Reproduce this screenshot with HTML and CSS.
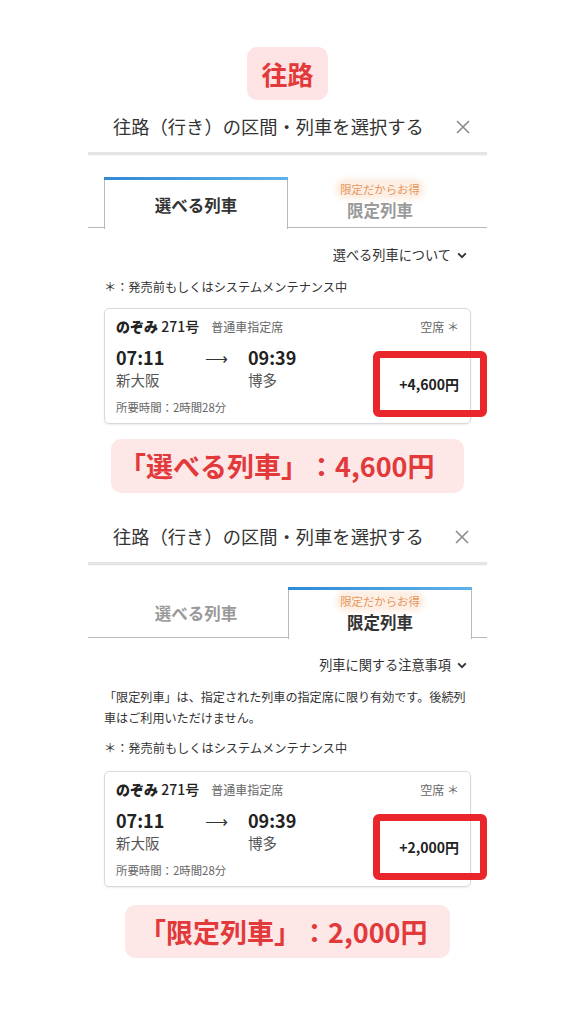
FILE: index.html
```html
<!DOCTYPE html>
<html lang="ja">
<head>
<meta charset="utf-8">
<link rel="stylesheet" href="styles.css">
</head>
<body>
<div class="page">
  <div class="center"><span class="pill-top">往路</span></div>

  <div class="header">
    <span class="title">往路（行き）の区間・列車を選択する</span>
    <svg class="close" width="14" height="14" viewBox="0 0 14 14"><path d="M1 1L13 13M13 1L1 13" stroke="#8a8a8a" stroke-width="1.6" fill="none"/></svg>
  </div>
  <div class="divider"></div>

  <div class="tabs">
    <div class="tab active"><span class="tab-label">選べる列車</span></div>
    <div class="tab"><span class="badge">限定だからお得</span><span class="tab-label muted">限定列車</span></div>
  </div>

  <div class="link-row">選べる列車について<svg class="chev" width="10" height="7" viewBox="0 0 10 7"><path d="M1.2 1.4L5 5.2L8.8 1.4" stroke="#333" stroke-width="1.9" fill="none"/></svg></div>
  <p class="note">＊：発売前もしくはシステムメンテナンス中</p>

  <div class="card">
    <div class="card-top">
      <span class="train"><b>のぞみ</b> <span class="num">271号</span></span>
      <span class="seat-type">普通車指定席</span>
      <span class="vacancy">空席 ＊</span>
    </div>
    <div class="card-mid">
      <span class="time">07:11</span>
      <span class="arrow">⟶</span>
      <span class="time">09:39</span>
      <span class="price">+4,600円</span>
      <span class="station">新大阪</span>
      <span></span>
      <span class="station">博多</span>
    </div>
    <div class="duration">所要時間：2時間28分</div>
    <div class="highlight"></div>
  </div>

  <div class="center"><span class="annot annot-1">「選べる列車」：4,600円</span></div>

  <div class="header header-2">
    <span class="title">往路（行き）の区間・列車を選択する</span>
    <svg class="close" width="14" height="14" viewBox="0 0 14 14"><path d="M1 1L13 13M13 1L1 13" stroke="#8a8a8a" stroke-width="1.6" fill="none"/></svg>
  </div>
  <div class="divider"></div>

  <div class="tabs">
    <div class="tab"><span class="tab-label muted">選べる列車</span></div>
    <div class="tab active"><span class="badge">限定だからお得</span><span class="tab-label">限定列車</span></div>
  </div>

  <div class="link-row">列車に関する注意事項<svg class="chev" width="10" height="7" viewBox="0 0 10 7"><path d="M1.2 1.4L5 5.2L8.8 1.4" stroke="#333" stroke-width="1.9" fill="none"/></svg></div>
  <p class="para">「限定列車」は、指定された列車の指定席に限り有効です。後続列<br>車はご利用いただけません。</p>
  <p class="note note-2">＊：発売前もしくはシステムメンテナンス中</p>

  <div class="card card-2">
    <div class="card-top">
      <span class="train"><b>のぞみ</b> <span class="num">271号</span></span>
      <span class="seat-type">普通車指定席</span>
      <span class="vacancy">空席 ＊</span>
    </div>
    <div class="card-mid">
      <span class="time">07:11</span>
      <span class="arrow">⟶</span>
      <span class="time">09:39</span>
      <span class="price">+2,000円</span>
      <span class="station">新大阪</span>
      <span></span>
      <span class="station">博多</span>
    </div>
    <div class="duration">所要時間：2時間28分</div>
    <div class="highlight"></div>
  </div>

  <div class="center"><span class="annot annot-2">「限定列車」：2,000円</span></div>
</div>
</body>
</html>
```

FILE: styles.css
```css
* { box-sizing: border-box; }
html, body { margin: 0; padding: 0; background: #fff; }
body {
  font-family: "Noto Sans CJK JP", "Noto Sans", sans-serif;
  color: #333;
  text-spacing-trim: space-all;
}
.page {
  width: 576px;
  padding: 47px 89px 40px 88px;
}
.center { display: flex; justify-content: center; }

.pill-top {
  display: inline-block;
  height: 53px;
  line-height: 53px;
  padding: 0 14px;
  background: #fde3e3;
  border-radius: 10px;
  color: #e4393a;
  font-weight: 700;
  font-size: 26px;
}

.header {
  height: 52px;
  display: flex;
  align-items: center;
  justify-content: space-between;
  padding: 0 17px 0 25px;
}
.header-2 { margin-top: 17px; padding-right: 18px; }
.title { font-size: 18.3px; color: #333; }
.close { display: block; margin-top: 1px; }

.divider {
  height: 3px;
  background: #e4e4e4;
  box-shadow: 0 1px 1px rgba(0,0,0,0.04);
}

.tabs {
  margin-top: 22px;
  height: 51px;
  display: flex;
  padding-left: 16px;
  border-bottom: 1px solid #b8b8b8;
}
.tab {
  width: 184px;
  height: 51px;
  display: flex;
  flex-direction: column;
  align-items: center;
  justify-content: center;
  position: relative;
}
.tab.active {
  border-left: 1px solid #b8b8b8;
  border-right: 1px solid #b8b8b8;
  border-top: 3px solid #3590d8;
  background: #fff;
  margin-bottom: -1px;
  height: 52px;
}
.tab.active::before {
  content: "";
  position: absolute;
  left: -1px; right: -1px; top: -3px;
  height: 3px;
  background: linear-gradient(90deg, #2f8ad6, #5db3ea);
}
.tab-label {
  font-size: 16.5px;
  font-weight: 700;
  color: #333;
  line-height: 22px;
}
.tab-label.muted { color: #9a9a9a; }
.badge {
  font-size: 11.4px;
  line-height: 16px;
  color: #e7955a;
  background: #fdefe4;
  box-shadow: 0 0 5px 3px #fdf0e6;
  border-radius: 8px;
  padding: 0 2px;
  margin-bottom: 2px;
  margin-top: -3px;
}

.link-row {
  margin-top: 17px;
  display: flex;
  justify-content: flex-end;
  align-items: center;
  font-size: 13.2px;
  line-height: 20px;
  padding-right: 20px;
  color: #333;
}
.chev { margin-left: 6px; display: block; }

.note {
  margin: 13px 0 0 0;
  padding-left: 16px;
  font-size: 12.2px;
  line-height: 18px;
  color: #333;
}
.note-2 { margin-top: 11px; }
.para {
  margin: 11px 0 0 0;
  padding: 0 10px 0 16px;
  font-size: 12.1px;
  line-height: 21px;
  color: #333;
  white-space: nowrap;
}

.card {
  position: relative;
  margin: 12px 16px 0 16px;
  border: 1px solid #d9d9d9;
  border-radius: 5px;
  box-shadow: 0 1px 2px rgba(0,0,0,0.08);
  padding: 7px 11px 7px 11px;
  height: 116px;
}
.card-2 { margin-top: 14px; }
.card-top {
  display: flex;
  align-items: center;
  height: 20px;
}
.train { font-size: 14px; color: #222; font-weight: 700; }
.num { font-size: 14px; font-weight: 500; }
.seat-type { font-size: 12px; color: #666; margin-left: 12px; }
.vacancy { margin-left: auto; font-size: 12px; color: #666; }

.card-mid {
  margin-top: 9px;
  display: grid;
  grid-template-columns: 89px 43px 1fr auto;
  grid-template-rows: 24px 21px;
}
.time { font-size: 18px; font-weight: 700; color: #222; line-height: 24px; }
.arrow { font-size: 16px; line-height: 24px; color: #333; }
.station { font-size: 14.5px; color: #555; line-height: 21px; }
.price {
  grid-column: 4;
  grid-row: 1 / span 2;
  align-self: end;
  font-size: 14px;
  font-weight: 700;
  color: #222;
  margin-bottom: -4px;
}
.duration {
  margin-top: 9px;
  font-size: 11.4px;
  color: #666;
  line-height: 16px;
}
.highlight {
  position: absolute;
  left: 268px;
  top: 42px;
  width: 114px;
  height: 66px;
  border: 7px solid #e9262c;
  border-radius: 6px;
}

.annot {
  display: inline-block;
  height: 54px;
  line-height: 54px;
  background: #fde7e7;
  border-radius: 10px;
  color: #e23a3b;
  font-weight: 700;
  font-size: 27px;
  white-space: nowrap;
}
.annot-1 { margin-top: 15px; width: 353px; padding-left: 8px; }
.annot-2 { margin-top: 18px; width: 325px; padding-left: 14px; height: 53px; line-height: 53px; }
```
